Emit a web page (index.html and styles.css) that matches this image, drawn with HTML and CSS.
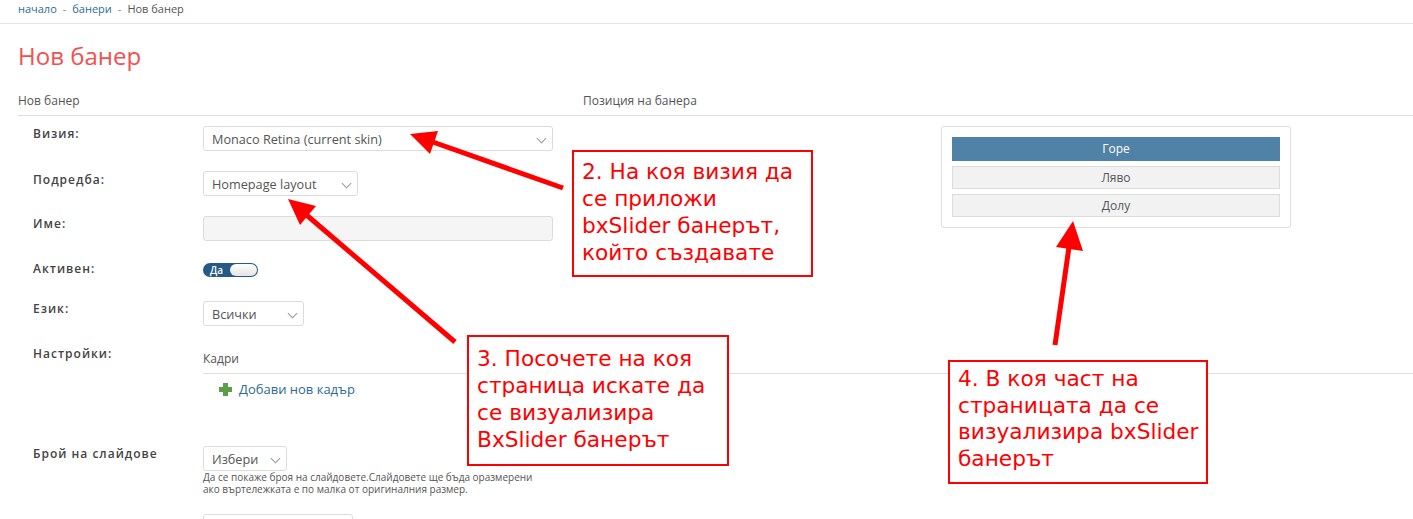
FILE: index.html
```html
<!DOCTYPE html>
<html lang="bg">
<head>
    <meta charset="UTF-8">
    <meta name="viewport" content="width=device-width, initial-scale=1.0">
    <title>Нов банер</title>
    <link rel="stylesheet" href="styles.css">
</head>
<body>

<div class="breadcrumb">
    <a href="#">начало</a><span class="sep">-</span><a href="#">банери</a><span class="sep">-</span><span>Нов банер</span>
</div>

<h1 class="page-title">Нов банер</h1>

<div class="panel-heads">
    <div class="panel-head left">Нов банер</div>
    <div class="panel-head">Позиция на банера</div>
</div>

<div class="top-area">
    <div class="form-col">
        <div class="row">
            <label class="label">Визия:</label>
            <div class="select wide">Monaco Retina (current skin)<span class="chev"></span></div>
        </div>
        <div class="row row-gap">
            <label class="label pad">Подредба:</label>
            <div class="select w155">Homepage layout<span class="chev"></span></div>
        </div>
        <div class="row row-gap">
            <label class="label">Име:</label>
            <div class="input wide"></div>
        </div>
        <div class="row row-gap">
            <label class="label">Активен:</label>
            <div class="toggle"><span class="toggle-on">Да</span><span class="knob"></span></div>
        </div>
        <div class="row row-lang">
            <label class="label">Език:</label>
            <div class="select w101">Всички<span class="chev"></span></div>
        </div>
    </div>
    <div class="position-box">
        <div class="pos-btn active">Горе</div>
        <div class="pos-btn">Ляво</div>
        <div class="pos-btn">Долу</div>
    </div>
</div>

<div class="row settings">
    <label class="label">Настройки:</label>
    <div class="settings-body">
        <div class="frames-head">Кадри</div>
        <a href="#" class="add-link"><span class="plus"></span>Добави нов кадър</a>
    </div>
</div>

<div class="row slides">
    <label class="label">Брой на слайдове</label>
    <div>
        <div class="select w84">Избери<span class="chev"></span></div>
        <p class="help">Да се покаже броя на слайдовете.Слайдовете ще бъда оразмерени<br>ако въртележката е по малка от оригиналния размер.</p>
    </div>
</div>

<div class="row next-row">
    <span class="label"></span>
    <div class="input blank w150"></div>
</div>

<!-- анотации -->
<div class="note note-2">2. На коя визия да<br>се приложи<br>bxSlider банерът,<br>който създавате</div>
<div class="note note-3">3. Посочете на коя<br>страница искате да<br>се визуализира<br>BxSlider банерът</div>
<div class="note note-4">4. В коя част на<br>страницата да се<br>визуализира bxSlider<br>банерът</div>

<svg class="arrows" width="1413" height="519" viewBox="0 0 1413 519">
    <g stroke="#ff0000" stroke-width="5" fill="#ff0000">
        <line x1="563" y1="188" x2="430" y2="141"/>
        <polygon points="410,134 438,131 430,154" stroke="none"/>
        <line x1="455" y1="342" x2="303" y2="212"/>
        <polygon points="288,199 316,206 300,225" stroke="none"/>
        <line x1="1055" y1="345" x2="1070" y2="240"/>
        <polygon points="1073,221 1083,251 1056,247" stroke="none"/>
    </g>
</svg>

</body>
</html>
```

FILE: styles.css
```css
body {
    margin: 0;
    font-family: "Open Sans", "Noto Sans", sans-serif;
    color: #555;
    background: #fff;
    position: relative;
    height: 519px;
    overflow: hidden;
}

a {
    text-decoration: none;
    color: #2d6b99;
}

.breadcrumb {
    height: 23px;
    padding-left: 18px;
    font-size: 11px;
    line-height: 17px;
    border-bottom: 1px solid #e3e3e3;
    color: #555;
}

.breadcrumb .sep {
    margin: 0 6px;
    color: #888;
}

.page-title {
    margin: 16px 0 0 18px;
    font-size: 24px;
    line-height: 32px;
    font-weight: normal;
    color: #f2504f;
}

.panel-heads {
    display: flex;
    margin: 21px 0 0 18px;
    padding-bottom: 6px;
    border-bottom: 1px solid #dedede;
    font-size: 12px;
    line-height: 16px;
    color: #555;
}

.panel-head.left {
    width: 565px;
}

.top-area {
    display: flex;
}

.form-col {
    width: 583px;
    padding-top: 10px;
}

.row {
    display: flex;
    align-items: flex-start;
}

.row-gap {
    margin-top: 20px;
}

.row-lang {
    margin-top: 24px;
}

.label {
    width: 170px;
    padding-left: 33px;
    flex-shrink: 0;
    font-size: 12px;
    line-height: 16px;
    font-weight: 600;
    letter-spacing: 1px;
    color: #444;
}

.label.pad {
    padding-top: 1px;
}

.select {
    position: relative;
    box-sizing: border-box;
    height: 25px;
    padding-left: 8px;
    border: 1px solid #dcdcdc;
    border-radius: 3px;
    font-size: 12.7px;
    line-height: 24px;
    color: #555;
    background: #fff;
}

.chev {
    position: absolute;
    right: 7px;
    top: 8px;
    width: 6px;
    height: 6px;
    border-right: 1px solid #999;
    border-bottom: 1px solid #999;
    transform: rotate(45deg);
}

.wide { width: 350px; }
.w155 { width: 155px; }
.w101 { width: 101px; }
.w84 { width: 84px; }
.w150 { width: 150px; }

.input {
    box-sizing: border-box;
    height: 25px;
    border: 1px solid #dcdcdc;
    border-radius: 3px;
    background: #f5f5f5;
}

.input.blank {
    background: #fff;
}

.toggle {
    display: flex;
    align-items: center;
    margin-top: 2px;
    width: 55px;
    height: 14px;
    border-radius: 7px;
    background: #245a85;
    box-sizing: border-box;
    padding: 1px;
}

.toggle-on {
    color: #fff;
    font-size: 10px;
    font-weight: 600;
    line-height: 12px;
    padding-left: 6px;
    width: 20px;
}

.knob {
    width: 27px;
    height: 12px;
    border-radius: 6px;
    background: linear-gradient(#ffffff, #e4e4e4);
}

.position-box {
    box-sizing: border-box;
    width: 350px;
    height: 102px;
    margin: 10px 0 0 358px;
    padding: 10px;
    border: 1px solid #dedede;
    border-radius: 3px;
    display: flex;
    flex-direction: column;
    gap: 5px;
}

.pos-btn {
    box-sizing: border-box;
    height: 23px;
    border: 1px solid #dcdcdc;
    background: #f2f2f2;
    text-align: center;
    font-size: 12px;
    line-height: 21px;
    color: #555;
}

.pos-btn.active {
    height: 24px;
    border-color: #5081a6;
    background: #5081a6;
    color: #fff;
    line-height: 22px;
}

.settings {
    margin-top: 20px;
}

.settings-body {
    flex: 1;
    padding-top: 5px;
}

.frames-head {
    font-size: 12px;
    line-height: 16px;
    padding-bottom: 6px;
    border-bottom: 1px solid #dedede;
    color: #555;
}

.add-link {
    display: flex;
    align-items: center;
    margin: 7px 0 0 16px;
    font-size: 13px;
    line-height: 17px;
    color: #2b6a96;
}

.plus {
    position: relative;
    width: 13px;
    height: 13px;
    margin-right: 7px;
}

.plus::before,
.plus::after {
    content: "";
    position: absolute;
    background: #5b9e45;
}

.plus::before {
    left: 0;
    top: 4px;
    width: 13px;
    height: 5px;
}

.plus::after {
    left: 4px;
    top: 0;
    width: 5px;
    height: 13px;
}

.slides {
    margin-top: 48px;
}

.help {
    margin: 0;
    font-size: 10px;
    line-height: 12px;
    white-space: nowrap;
    color: #555;
}

.next-row {
    margin-top: 19px;
}

.note {
    position: absolute;
    box-sizing: border-box;
    border: 2px solid #ff0000;
    background: #fff;
    color: #ff0000;
    font-family: "DejaVu Sans", sans-serif;
    font-size: 21.7px;
    line-height: 27px;
    white-space: nowrap;
    padding: 6px 8px;
}

.note-2 {
    left: 572px;
    top: 150px;
    width: 241px;
    height: 127px;
}

.note-3 {
    left: 467px;
    top: 335px;
    width: 262px;
    height: 131px;
    padding-top: 8px;
}

.note-4 {
    left: 948px;
    top: 360px;
    width: 260px;
    height: 124px;
    padding-top: 4px;
    line-height: 26.7px;
}

.arrows {
    position: absolute;
    left: 0;
    top: 0;
    pointer-events: none;
}
```
